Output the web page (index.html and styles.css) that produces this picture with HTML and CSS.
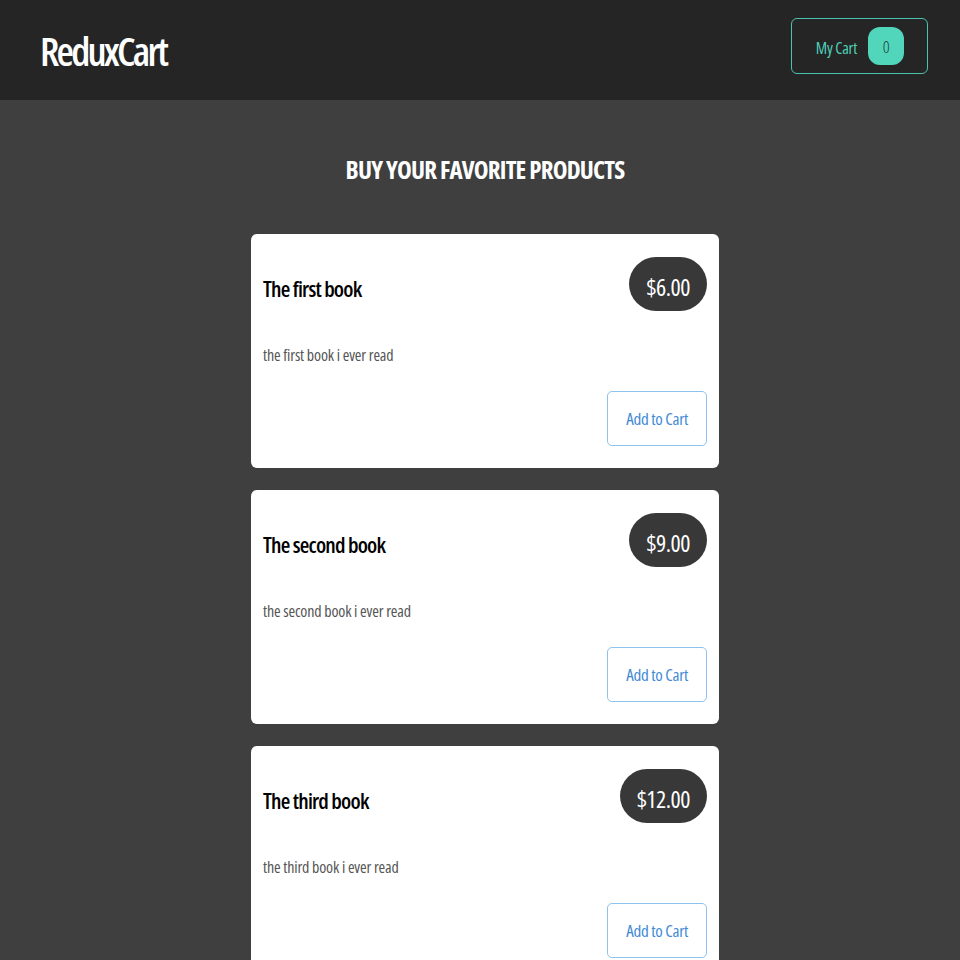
FILE: index.html
```html
<!DOCTYPE html>
<html lang="en">
<head>
<meta charset="utf-8">
<title>ReduxCart</title>
<link rel="stylesheet" href="styles.css">
</head>
<body>
<header class="header">
  <h1 class="logo">ReduxCart</h1>
  <button class="cart-button">
    <span>My Cart</span>
    <span class="badge">0</span>
  </button>
</header>
<main class="main">
  <section class="products">
    <h2 class="products-title">BUY YOUR FAVORITE PRODUCTS</h2>
    <ul class="product-list">
      <li class="card">
        <div class="card-header">
          <h3 class="card-title">The first book</h3>
          <div class="price">$6.00</div>
        </div>
        <p class="card-desc">the first book i ever read</p>
        <div class="card-actions"><button class="add-button">Add to Cart</button></div>
      </li>
      <li class="card">
        <div class="card-header">
          <h3 class="card-title">The second book</h3>
          <div class="price">$9.00</div>
        </div>
        <p class="card-desc">the second book i ever read</p>
        <div class="card-actions"><button class="add-button">Add to Cart</button></div>
      </li>
      <li class="card">
        <div class="card-header">
          <h3 class="card-title">The third book</h3>
          <div class="price">$12.00</div>
        </div>
        <p class="card-desc">the third book i ever read</p>
        <div class="card-actions"><button class="add-button">Add to Cart</button></div>
      </li>
    </ul>
  </section>
</main>
</body>
</html>
```
FILE: styles.css
```css
* { box-sizing: border-box; }
html, body {
  margin: 0;
  padding: 0;
  background: #3f3f3f;
  font-family: "Open Sans", "Noto Sans", sans-serif;
  font-stretch: 75%;
  height: 100%;
  overflow: hidden;
}
.header {
  height: 100px;
  background: #252525;
  display: flex;
  align-items: center;
  justify-content: space-between;
  padding: 0 32px 0 40px;
}
.logo {
  margin: 0;
  color: #ffffff;
  font-size: 40px;
  font-weight: 600;
  letter-spacing: -2.8px;
}
.cart-button {
  font-family: inherit;
  font-stretch: 75%;
  display: flex;
  align-items: center;
  gap: 11px;
  height: 56px;
  margin-bottom: 8px;
  padding: 0 23px 0 24px;
  background: transparent;
  border: 1px solid #4cc3ac;
  border-radius: 6px;
  color: #4fd1b8;
  font-size: 16px;
  letter-spacing: -0.2px;
}
.cart-button span:first-child {
  padding-top: 3px;
}
.badge {
  width: 36px;
  height: 38px;
  display: flex;
  align-items: center;
  justify-content: center;
  background: #51d6bb;
  border-radius: 12px;
  color: #1d3c38;
  font-size: 17px;
  font-weight: 300;
}
.main {
  padding-left: 10px;
}
.products {
  width: 468px;
  margin: 0 auto;
}
.products-title {
  margin: 0;
  padding-top: 52px;
  height: 134px;
  text-align: center;
  color: #ffffff;
  font-size: 25px;
  font-weight: 700;
  letter-spacing: -0.8px;
  white-space: nowrap;
}
.product-list {
  list-style: none;
  margin: 0;
  padding: 0;
  display: flex;
  flex-direction: column;
  gap: 22px;
}
.card {
  background: #ffffff;
  border-radius: 6px;
  padding: 23px 12px 22px;
}
.card-header {
  display: flex;
  align-items: center;
  justify-content: space-between;
}
.card-title {
  margin: 0;
  font-size: 22px;
  font-weight: 600;
  letter-spacing: -0.8px;
  color: #000000;
  padding-top: 7px;
}
.price {
  background: #383838;
  color: #ffffff;
  border-radius: 27px;
  height: 54px;
  line-height: 60px;
  padding: 0 17px;
  font-size: 24px;
  letter-spacing: -0.5px;
}
.card-desc {
  margin: 33px 0 0;
  color: #555555;
  font-size: 16px;
  letter-spacing: -0.15px;
  line-height: 22px;
}
.card-actions {
  display: flex;
  justify-content: flex-end;
  margin-top: 25px;
}
.add-button {
  font-family: inherit;
  font-stretch: 75%;
  height: 55px;
  padding: 0 18px;
  background: #ffffff;
  border: 1px solid #8fc3ec;
  border-radius: 5px;
  color: #3f8ad6;
  font-size: 17px;
  letter-spacing: -0.3px;
}
```
